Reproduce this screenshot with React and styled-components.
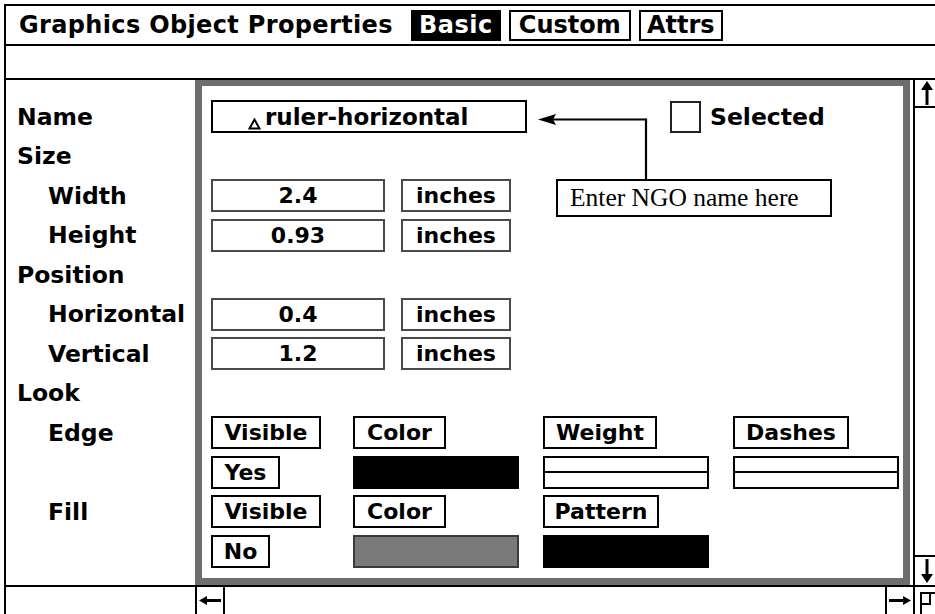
import React from "react";
import styled, { createGlobalStyle } from "styled-components";

const GlobalStyle = createGlobalStyle`
  html, body {
    margin: 0;
    padding: 0;
    background: #fff;
  }
  body {
    font-family: "DejaVu Sans", "Liberation Sans", sans-serif;
    color: #000;
    overflow: hidden;
  }
`;

const Window = styled.div`
  box-sizing: border-box;
  margin: 4px 0 0 4px;
  width: 931px;
  height: 610px;
  border-left: 2px solid #000;
  border-top: 2px solid #000;
  display: flex;
  flex-direction: column;
`;

const TitleBar = styled.div`
  box-sizing: border-box;
  height: 40px;
  border-bottom: 2px solid #000;
  display: flex;
  align-items: center;
  padding-left: 13px;
  gap: 8px;
`;

const Title = styled.div`
  font-size: 24px;
  font-weight: bold;
  letter-spacing: 0.35px;
  margin-right: 10px;
  white-space: nowrap;
`;

const Tab = styled.div`
  box-sizing: border-box;
  width: ${(p) => p.$w}px;
  height: 31px;
  display: flex;
  align-items: center;
  justify-content: center;
  font-size: 24px;
  font-weight: bold;
  border: 2px solid #000;
  background: ${(p) => (p.$active ? "#000" : "#fff")};
  color: ${(p) => (p.$active ? "#fff" : "#000")};
  letter-spacing: ${(p) => (p.$active ? "0.5px" : "0")};
`;

const Band = styled.div`
  height: 32px;
`;

const Main = styled.div`
  box-sizing: border-box;
  height: 507px;
  border-top: 2px solid #000;
  display: flex;
`;

const LabelCol = styled.div`
  width: 189px;
  padding-top: 17px;
  box-sizing: border-box;
`;

const Label = styled.div`
  height: 39.5px;
  display: flex;
  align-items: center;
  padding-left: ${(p) => (p.$indent ? 42 : 11)}px;
  font-size: 23.5px;
  font-weight: bold;
  white-space: nowrap;
`;

const PanelFrame = styled.div`
  box-sizing: border-box;
  width: 715px;
  padding: 6px 7px 7px 7px;
  margin-right: 3px;
  background: #6e6e6e;
`;

const Panel = styled.div`
  position: relative;
  box-sizing: border-box;
  height: 100%;
  background: #fff;
  padding: 11px 0 0 9px;
`;

const Row = styled.div`
  height: 39.5px;
  display: flex;
  align-items: center;
`;

const NameField = styled.div`
  box-sizing: border-box;
  width: 316px;
  height: 33px;
  border: 2px solid #000;
  display: flex;
  align-items: center;
  padding-left: 35px;
  font-size: 23px;
  font-weight: bold;
  white-space: nowrap;
`;

const Caret = styled.svg`
  width: 13px;
  height: 12px;
  margin-top: 14px;
  margin-right: 4px;
  flex: none;
`;

const Check = styled.div`
  box-sizing: border-box;
  width: 31px;
  height: 32px;
  border: 2px solid #222;
  margin-left: 143px;
`;

const CheckLabel = styled.div`
  font-size: 23.5px;
  font-weight: bold;
  margin-left: 9px;
`;

const Box = styled.div`
  box-sizing: border-box;
  width: ${(p) => p.$w}px;
  height: 33px;
  flex: none;
  display: flex;
  align-items: center;
  justify-content: center;
  font-size: 22px;
  font-weight: bold;
  border: 2px solid ${(p) => (p.$soft ? "#4a4a4a" : "#000")};
  margin-right: ${(p) => p.$gap || 0}px;
  white-space: nowrap;
`;

const Slot = styled.div`
  width: ${(p) => p.$w}px;
  flex: none;
  display: flex;
  align-items: center;
`;

const Swatch = styled.div`
  box-sizing: border-box;
  width: 166px;
  height: 33px;
  border: 2px solid ${(p) => (p.$kind === "gray" ? "#3a3a3a" : "#000")};
  ${(p) => p.$kind === "black" && "background: #000;"}
  ${(p) => p.$kind === "gray" && "background: #7a7a7a;"}
  ${(p) =>
    p.$kind === "line" &&
    "background: linear-gradient(#000, #000) center / 100% 2px no-repeat #fff;"}
`;

const Callout = styled.div`
  position: absolute;
  left: 354px;
  top: 93px;
  box-sizing: border-box;
  width: 276px;
  height: 38px;
  border: 2px solid #000;
  background: #fff;
  display: flex;
  align-items: center;
  padding-left: 12px;
  font-family: "Liberation Serif", "Times New Roman", serif;
  font-size: 25.5px;
  white-space: nowrap;
`;

const Leader = styled.svg`
  position: absolute;
  left: 336px;
  top: 24px;
  width: 112px;
  height: 70px;
`;

const VScroll = styled.div`
  box-sizing: border-box;
  width: 22px;
  border-left: 2px solid #000;
  display: flex;
  flex-direction: column;
`;

const ArrowBox = styled.div`
  box-sizing: border-box;
  height: ${(p) => p.$h}px;
  width: ${(p) => (p.$w ? `${p.$w}px` : "auto")};
  flex: none;
  display: flex;
  align-items: center;
  justify-content: center;
  padding-left: ${(p) => p.$pl || 0}px;
  border-top: ${(p) => (p.$top ? "2px solid #000" : "0")};
  border-bottom: ${(p) => (p.$bottom ? "2px solid #000" : "0")};
  border-left: ${(p) => (p.$left ? "2px solid #000" : "0")};
  border-right: ${(p) => (p.$right ? "2px solid #000" : "0")};
`;

const Spacer = styled.div`
  flex: 1;
`;

const Bottom = styled.div`
  box-sizing: border-box;
  height: 29px;
  border-top: 2px solid #000;
  display: flex;
`;

const BottomBlank = styled.div`
  width: 189px;
`;

const HScroll = styled.div`
  width: 718px;
  display: flex;
`;

const Corner = styled.div`
  box-sizing: border-box;
  width: 22px;
  border-left: 2px solid #000;
  overflow: hidden;
`;

const UpArrow = () => (
  <svg width="12" height="24" viewBox="0 0 12 24">
    <polygon points="6,0 0,9 12,9" fill="#000" />
    <rect x="4.5" y="8" width="3" height="16" fill="#000" />
  </svg>
);

const DownArrow = () => (
  <svg width="12" height="24" viewBox="0 0 12 24">
    <rect x="4.5" y="0" width="3" height="16" fill="#000" />
    <polygon points="6,24 0,15 12,15" fill="#000" />
  </svg>
);

const LeftArrow = () => (
  <svg width="22" height="9" viewBox="0 0 22 9">
    <polygon points="0,4.5 8,0 8,9" fill="#000" />
    <rect x="7" y="3" width="15" height="3" fill="#000" />
  </svg>
);

const RightArrow = () => (
  <svg width="22" height="9" viewBox="0 0 22 9">
    <rect x="0" y="3" width="15" height="3" fill="#000" />
    <polygon points="22,4.5 14,0 14,9" fill="#000" />
  </svg>
);

const labels = [
  ["Name", 0],
  ["Size", 0],
  ["Width", 1],
  ["Height", 1],
  ["Position", 0],
  ["Horizontal", 1],
  ["Vertical", 1],
  ["Look", 0],
  ["Edge", 1],
  ["", 1],
  ["Fill", 1],
  ["", 1],
];

const MeasureRow = ({ value }) => (
  <Row>
    <Box $w={174} $soft $gap={16}>
      {value}
    </Box>
    <Box $w={110} $soft>
      inches
    </Box>
  </Row>
);

const App = () => {
  return (
    <>
      <GlobalStyle />
      <Window>
        <TitleBar>
          <Title>Graphics Object Properties</Title>
          <Tab $w={90} $active>
            Basic
          </Tab>
          <Tab $w={122}>Custom</Tab>
          <Tab $w={84}>Attrs</Tab>
        </TitleBar>
        <Band />
        <Main>
          <LabelCol>
            {labels.map(([text, indent], i) => (
              <Label key={i} $indent={indent}>
                {text}
              </Label>
            ))}
          </LabelCol>
          <PanelFrame>
            <Panel>
              <Row>
                <NameField>
                  <Caret viewBox="0 0 13 12">
                    <polygon
                      points="6.5,1.5 1.5,10.5 11.5,10.5"
                      fill="#fff"
                      stroke="#000"
                      strokeWidth="2"
                    />
                  </Caret>
                  ruler-horizontal
                </NameField>
                <Check />
                <CheckLabel>Selected</CheckLabel>
              </Row>
              <Row />
              <MeasureRow value="2.4" />
              <MeasureRow value="0.93" />
              <Row />
              <MeasureRow value="0.4" />
              <MeasureRow value="1.2" />
              <Row />
              <Row>
                <Slot $w={142}>
                  <Box $w={110}>Visible</Box>
                </Slot>
                <Slot $w={190}>
                  <Box $w={93}>Color</Box>
                </Slot>
                <Slot $w={190}>
                  <Box $w={114}>Weight</Box>
                </Slot>
                <Slot $w={170}>
                  <Box $w={116}>Dashes</Box>
                </Slot>
              </Row>
              <Row>
                <Slot $w={142}>
                  <Box $w={69}>Yes</Box>
                </Slot>
                <Slot $w={190}>
                  <Swatch $kind="black" />
                </Slot>
                <Slot $w={190}>
                  <Swatch $kind="line" />
                </Slot>
                <Slot $w={170}>
                  <Swatch $kind="line" />
                </Slot>
              </Row>
              <Row>
                <Slot $w={142}>
                  <Box $w={110}>Visible</Box>
                </Slot>
                <Slot $w={190}>
                  <Box $w={93}>Color</Box>
                </Slot>
                <Slot $w={190}>
                  <Box $w={116}>Pattern</Box>
                </Slot>
              </Row>
              <Row>
                <Slot $w={142}>
                  <Box $w={59}>No</Box>
                </Slot>
                <Slot $w={190}>
                  <Swatch $kind="gray" />
                </Slot>
                <Slot $w={190}>
                  <Swatch $kind="black" />
                </Slot>
              </Row>

              <Leader viewBox="0 0 112 70">
                <polygon points="0,9.5 18,4 15,9.5 18,15" fill="#000" />
                <line x1="12" y1="9.5" x2="108" y2="9.5" stroke="#000" strokeWidth="2.2" />
                <line x1="108" y1="8.5" x2="108" y2="70" stroke="#000" strokeWidth="2.2" />
              </Leader>
              <Callout>Enter NGO name here</Callout>
            </Panel>
          </PanelFrame>
          <VScroll>
            <ArrowBox $h={28} $bottom $pl={4}>
              <UpArrow />
            </ArrowBox>
            <Spacer />
            <ArrowBox $h={30} $top $pl={4}>
              <DownArrow />
            </ArrowBox>
          </VScroll>
        </Main>
        <Bottom>
          <BottomBlank />
          <HScroll>
            <ArrowBox $h={27} $w={30} $left $right>
              <LeftArrow />
            </ArrowBox>
            <Spacer />
            <ArrowBox $h={27} $w={28} $left>
              <RightArrow />
            </ArrowBox>
          </HScroll>
          <Corner>
            <svg width="20" height="27" viewBox="0 0 20 27">
              <rect x="6" y="6" width="20" height="30" fill="none" stroke="#000" strokeWidth="2" />
              <polyline points="6,17 15,17 15,6" fill="none" stroke="#000" strokeWidth="2" />
            </svg>
          </Corner>
        </Bottom>
      </Window>
    </>
  );
};

export default App;
